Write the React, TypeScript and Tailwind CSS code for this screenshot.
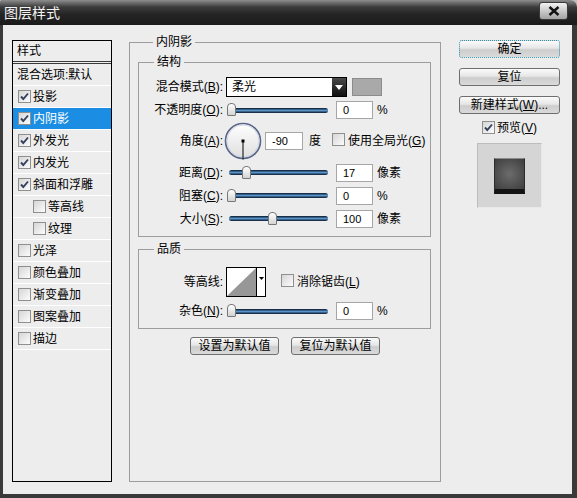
import React from "react"

function Check({ checked }: { checked?: boolean }) {
  return (
    <span className="inline-flex w-[13px] h-[13px] shrink-0 items-center justify-center border border-[#8f8f8f] bg-gradient-to-br from-[#d6d6d6] to-[#fcfcfc]">
      {checked && (
        <svg width="11" height="11" viewBox="0 0 11 11">
          <path d="M2 5.5 L4.3 8 L9 2.5" fill="none" stroke="#33415f" strokeWidth="1.9" />
        </svg>
      )}
    </span>
  )
}

function Key({ k }: { k: string }) {
  return (
    <>
      (<span className="underline">{k}</span>)
    </>
  )
}

function Slider({ pos }: { pos: number }) {
  return (
    <div className="relative ml-[4px] w-[101px] h-[18px] flex items-center">
      <div className="ml-[2px] w-[99px] h-[5px] rounded-full bg-gradient-to-b from-[#081a2e] via-[#5a93c8] to-[#0a1d33]" />
      <div
        className="absolute top-[2px] w-[9px] h-[13px] rounded-t-[4px] rounded-b-[1px] border border-[#777] bg-gradient-to-b from-white to-[#d4d4d4]"
        style={{ left: pos }}
      />
    </div>
  )
}

function NumBox({ value, w = 37 }: { value: string; w?: number }) {
  return (
    <div
      className="h-[18px] border border-[#a6a6a6] bg-white pl-[6px] text-[11px] leading-[16px] font-['Liberation_Sans',sans-serif]"
      style={{ width: w }}
    >
      {value}
    </div>
  )
}

function Label({ children }: { children: React.ReactNode }) {
  return <div className="w-[84px] shrink-0 text-right text-[12px] leading-[16px] whitespace-nowrap">{children}</div>
}

function Btn({ children, w, focus }: { children: React.ReactNode; w: number; focus?: boolean }) {
  return (
    <div
      className={
        "h-[18px] flex items-center justify-center rounded-[3px] border text-[12px] leading-[16px] bg-[linear-gradient(#fbfbfb,#e6e6e6_45%,#cdcdcd_55%,#dadada)] " +
        (focus ? "border-dotted border-[#2f8ea8]" : "border-[#6f6f6f]")
      }
      style={{ width: w }}
    >
      {children}
    </div>
  )
}

function Group({ title, children, className }: { title: string; children: React.ReactNode; className?: string }) {
  return (
    <fieldset className={"border border-[#9d9d9d] " + (className ?? "")}>
      <legend className="ml-[15px] px-[3px] text-[12px] leading-[16px]">{title}</legend>
      {children}
    </fieldset>
  )
}

const items: { name: string; checked: boolean; sub?: boolean; active?: boolean }[] = [
  { name: "投影", checked: true },
  { name: "内阴影", checked: true, active: true },
  { name: "外发光", checked: true },
  { name: "内发光", checked: true },
  { name: "斜面和浮雕", checked: true },
  { name: "等高线", checked: false, sub: true },
  { name: "纹理", checked: false, sub: true },
  { name: "光泽", checked: false },
  { name: "颜色叠加", checked: false },
  { name: "渐变叠加", checked: false },
  { name: "图案叠加", checked: false },
  { name: "描边", checked: false },
]

export default function App() {
  return (
    <div className="w-[577px] h-[498px] flex flex-col bg-[#bdbdbd] text-black font-['Liberation_Sans','Noto_Sans_CJK_SC',sans-serif]">
      {/* title bar */}
      <div className="h-[25px] shrink-0 flex items-center justify-between pl-[4px] pr-[9px] rounded-tr-[7px] rounded-tl-[2px] bg-[linear-gradient(to_bottom,#8e8e8e_0px,#3c3c3c_7px,#252525_14px,#1a1a1a_25px)]">
        <span className="text-[14px] leading-[18px] text-[#f4f4f4]">图层样式</span>
        <div className="w-[29px] h-[18px] mb-[3px] rounded-[3px] border border-[#3a3a3a] bg-gradient-to-b from-[#f2f2f2] to-[#a3a3a3] flex items-center justify-center">
          <svg width="12" height="10" viewBox="0 0 12 10">
            <path d="M1.5 1 L10.5 9 M10.5 1 L1.5 9" stroke="#111" strokeWidth="2.4" />
          </svg>
        </div>
      </div>

      {/* body */}
      <div className="flex-1 flex items-start bg-[#ededed] border-l-[3px] border-r-[5px] border-b-[4px] border-[#3a3a3a] pl-[9px] pt-[9px]">
        {/* styles list */}
        <div className="mt-[6px] w-[100px] h-[442px] border border-black bg-[#ededed] text-[12px] leading-[16px]">
          <div className="h-[23px] flex items-center pl-[4px] border-b-[3px] border-double border-[#3a3a3a]">样式</div>
          <div className="h-[22px] flex items-center pl-[4px] border-b border-white whitespace-nowrap">混合选项:默认</div>
          {items.map((it) => (
            <div
              key={it.name}
              className={
                "h-[22px] flex items-center border-b border-white " +
                (it.sub ? "pl-[20px] " : "pl-[5px] ") +
                (it.active ? "bg-[#1b8ee3] text-white" : "")
              }
            >
              <Check checked={it.checked} />
              <span className="ml-[2px]">{it.name}</span>
            </div>
          ))}
        </div>

        {/* main settings */}
        <Group title="内阴影" className="ml-[17px] w-[312px] h-[448px] px-[8px]">
          <Group title="结构" className="mt-[4px] w-[293px] pt-[7px] pb-[8px]">
            <div className="h-[20px] flex items-center">
              <Label>
                混合模式<Key k="B" />:
              </Label>
              <div className="ml-[3px] w-[121px] h-[20px] flex border border-black bg-white">
                <span className="flex-1 pl-[5px] text-[12px] leading-[18px]">柔光</span>
                <span className="w-[14px] h-full flex items-center justify-center bg-gradient-to-b from-[#4a4a4a] to-[#111]">
                  <svg width="8" height="5" viewBox="0 0 8 5">
                    <path d="M0 0 H8 L4 5 Z" fill="#fff" />
                  </svg>
                </span>
              </div>
              <div className="ml-[5px] w-[30px] h-[18px] border border-[#8c8c8c] bg-[#a9a9a9]" />
            </div>

            <div className="mt-[4px] h-[18px] flex items-center">
              <Label>
                不透明度<Key k="O" />:
              </Label>
              <Slider pos={0} />
              <div className="ml-[8px]"><NumBox value="0" /></div>
              <span className="ml-[4px] text-[12px]">%</span>
            </div>

            <div className="mt-[3px] h-[38px] flex items-center">
              <Label>
                角度<Key k="A" />:
              </Label>
              <svg className="ml-[1px]" width="38" height="38" viewBox="0 0 38 38">
                <defs>
                  <linearGradient id="dial" x1="0" y1="0" x2="0" y2="1">
                    <stop offset="0" stopColor="#ffffff" />
                    <stop offset="1" stopColor="#dedede" />
                  </linearGradient>
                </defs>
                <circle cx="19" cy="19" r="17.5" fill="url(#dial)" stroke="#5a6688" strokeWidth="1.6" />
                <circle cx="19" cy="19" r="16" fill="none" stroke="#c9cfe0" strokeWidth="0.8" />
                <line x1="19" y1="19" x2="19" y2="37.5" stroke="#000" strokeWidth="1" />
                <rect x="17.5" y="17.5" width="3" height="3" fill="#000" />
              </svg>
              <div className="ml-[3px]"><NumBox value="-90" w={38} /></div>
              <span className="ml-[6px] text-[12px]">度</span>
              <span className="ml-[11px]"><Check /></span>
              <span className="ml-[3px] text-[12px] whitespace-nowrap">
                使用全局光<Key k="G" />
              </span>
            </div>

            <div className="mt-[3px] h-[19px] flex items-center">
              <Label>
                距离<Key k="D" />:
              </Label>
              <Slider pos={15} />
              <div className="ml-[8px]"><NumBox value="17" /></div>
              <span className="ml-[4px] text-[12px]">像素</span>
            </div>

            <div className="mt-[4px] h-[19px] flex items-center">
              <Label>
                阻塞<Key k="C" />:
              </Label>
              <Slider pos={0} />
              <div className="ml-[8px]"><NumBox value="0" /></div>
              <span className="ml-[4px] text-[12px]">%</span>
            </div>

            <div className="mt-[4px] h-[19px] flex items-center">
              <Label>
                大小<Key k="S" />:
              </Label>
              <Slider pos={41} />
              <div className="ml-[8px]"><NumBox value="100" /></div>
              <span className="ml-[4px] text-[12px]">像素</span>
            </div>
          </Group>

          <Group title="品质" className="mt-[4px] w-[293px] pt-[10px] pb-[8px]">
            <div className="h-[30px] flex items-center">
              <Label>等高线:</Label>
              <div className="ml-[3px] w-[40px] h-[30px] flex border border-black bg-white">
                <svg width="29" height="28" viewBox="0 0 29 28">
                  <rect width="29" height="28" fill="#fff" />
                  <path d="M0 28 L29 0 V28 Z" fill="#979797" />
                </svg>
                <span className="flex-1 border-l border-black flex justify-center pt-[9px]">
                  <svg width="5" height="3" viewBox="0 0 5 3">
                    <path d="M0 0 H5 L2.5 3 Z" fill="#000" />
                  </svg>
                </span>
              </div>
              <span className="ml-[15px]"><Check /></span>
              <span className="ml-[3px] text-[12px] whitespace-nowrap">
                消除锯齿<Key k="L" />
              </span>
            </div>

            <div className="mt-[5px] h-[18px] flex items-center">
              <Label>
                杂色<Key k="N" />:
              </Label>
              <Slider pos={0} />
              <div className="ml-[8px]"><NumBox value="0" /></div>
              <span className="ml-[4px] text-[12px]">%</span>
            </div>
          </Group>

          <div className="mt-[8px] flex justify-center gap-[12px]">
            <Btn w={89}>设置为默认值</Btn>
            <Btn w={89}>复位为默认值</Btn>
          </div>
        </Group>

        {/* right column */}
        <div className="mt-[6px] ml-[18px] w-[101px] flex flex-col items-center">
          <Btn w={101} focus>确定</Btn>
          <div className="mt-[10px]"><Btn w={101}>复位</Btn></div>
          <div className="mt-[10px]">
            <Btn w={101}>
              新建样式<Key k="W" />...
            </Btn>
          </div>
          <div className="mt-[7px] h-[13px] flex items-center text-[12px] leading-[16px]">
            <Check checked />
            <span className="ml-[2px]">
              预览<Key k="V" />
            </span>
          </div>
          <div className="mt-[9px] w-[65px] h-[65px] flex items-center justify-center bg-[#d5d5d5] border border-t-[#bdbdbd] border-l-[#bdbdbd] border-r-[#e8e8e8] border-b-[#e8e8e8]">
            <div className="w-[31px] h-[36px] border-t border-t-[#8a8a8a] border-x border-x-[#2c2c2c] border-b-[5px] border-b-[#141414] bg-[radial-gradient(circle,#6c6c6c,#3d3d3d)]" />
          </div>
        </div>
      </div>
    </div>
  )
}
